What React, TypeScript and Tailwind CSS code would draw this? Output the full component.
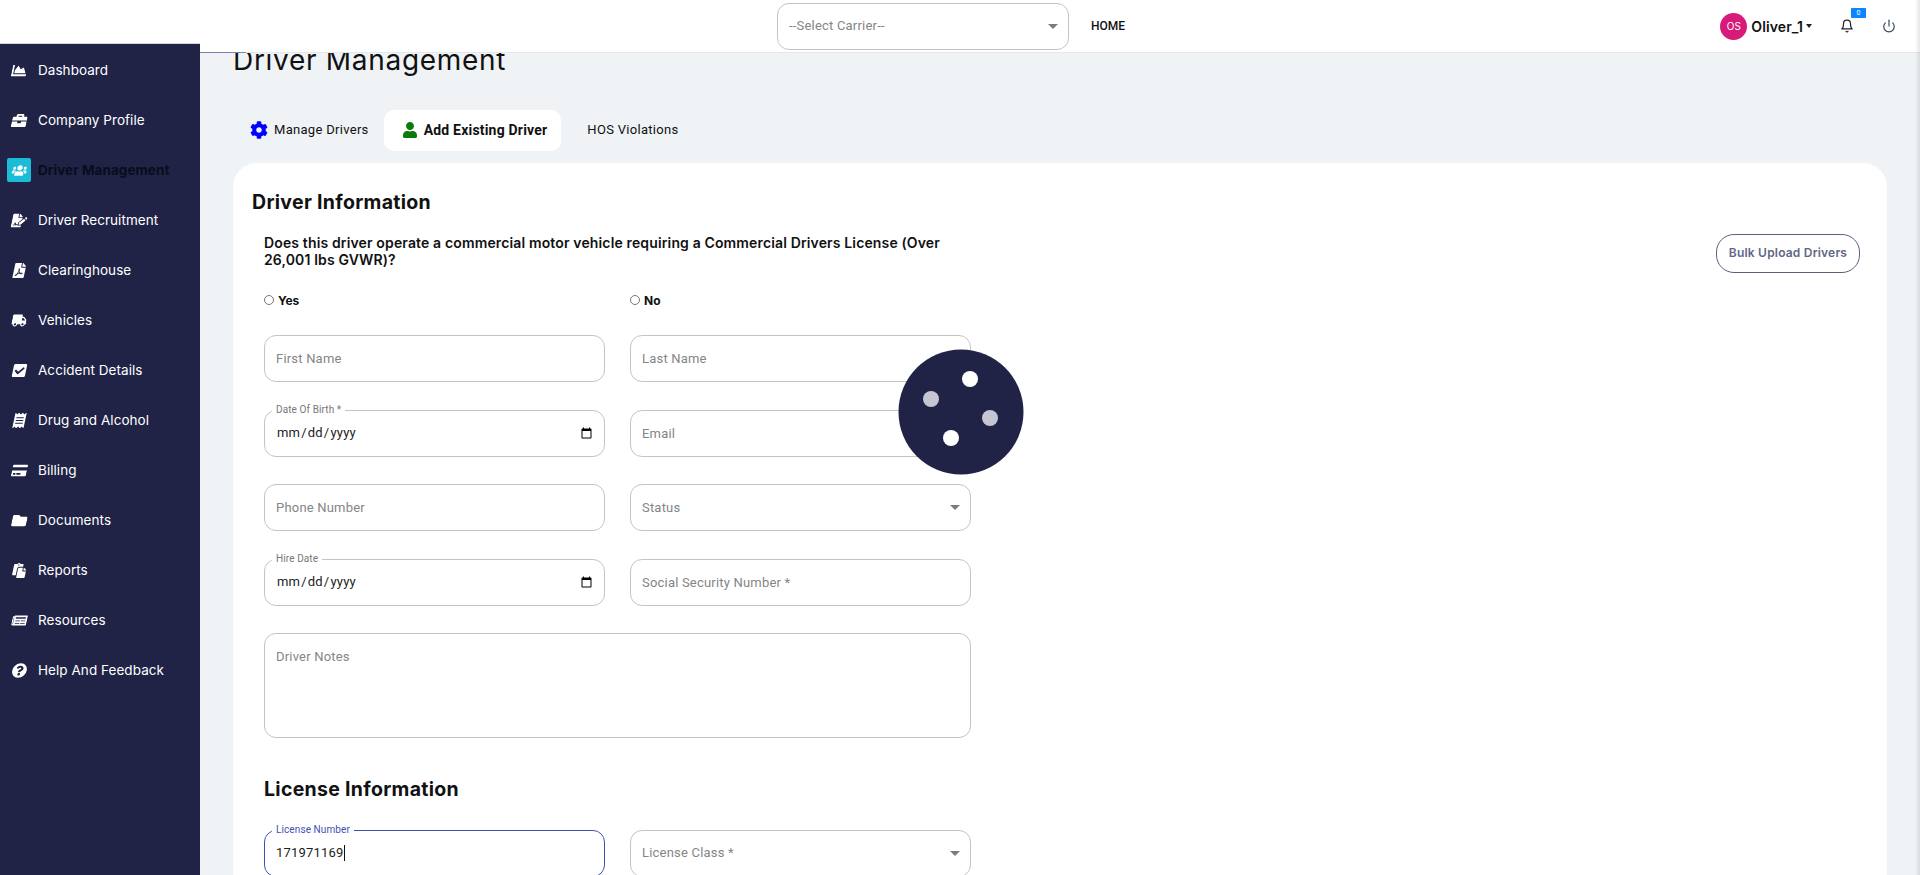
import React from 'react';
import {
  FaChartArea,
  FaBriefcase,
  FaUsers,
  FaFileSignature,
  FaFilePdf,
  FaTruck,
  FaCheckSquare,
  FaReceipt,
  FaCreditCard,
  FaFolder,
  FaPaste,
  FaNewspaper,
  FaQuestionCircle,
  FaCog,
  FaUser,
} from 'react-icons/fa';
import { FiBell, FiPower } from 'react-icons/fi';

const HEADING_FONT = "font-['Inter','Liberation_Sans',sans-serif]";
const FIELD_FONT = "font-['Roboto','Liberation_Sans',sans-serif]";

const navItems = [
  { label: 'Dashboard', icon: FaChartArea },
  { label: 'Company Profile', icon: FaBriefcase },
  { label: 'Driver Management', icon: FaUsers, active: true },
  { label: 'Driver Recruitment', icon: FaFileSignature },
  { label: 'Clearinghouse', icon: FaFilePdf },
  { label: 'Vehicles', icon: FaTruck },
  { label: 'Accident Details', icon: FaCheckSquare },
  { label: 'Drug and Alcohol', icon: FaReceipt },
  { label: 'Billing', icon: FaCreditCard },
  { label: 'Documents', icon: FaFolder },
  { label: 'Reports', icon: FaPaste },
  { label: 'Resources', icon: FaNewspaper },
  { label: 'Help And Feedback', icon: FaQuestionCircle },
];

const Caret: React.FC = () => (
  <span className="w-0 h-0 border-x-[5px] border-x-transparent border-t-[5px] border-t-[#7b7b7b]" />
);

const Outlined: React.FC<{
  label?: string;
  focused?: boolean;
  className?: string;
  children: React.ReactNode;
}> = ({ label, focused, className = 'h-[47px]', children }) => (
  <div
    className={`relative rounded-[12px] border ${focused ? 'border-[#3f51b5]' : 'border-[#c4c4c4]'} ${FIELD_FONT} ${className}`}
  >
    {label && (
      <span
        className={`absolute left-[7px] -top-[7px] bg-white px-[4px] text-[10px] leading-[12px] tracking-[0.1px] ${focused ? 'text-[#3f51b5]' : 'text-[#777]'}`}
      >
        {label}
      </span>
    )}
    {children}
  </div>
);

const TextField: React.FC<{ placeholder: string }> = ({ placeholder }) => (
  <Outlined>
    <input
      placeholder={placeholder}
      className="w-full h-full px-[11px] bg-transparent outline-none text-[13px] tracking-[0.2px] placeholder:text-[#858585]"
    />
  </Outlined>
);

const SelectField: React.FC<{ placeholder: string }> = ({ placeholder }) => (
  <Outlined>
    <div className="h-full pl-[11px] pr-[10px] flex items-center justify-between text-[13px] tracking-[0.2px] text-[#858585]">
      <span>{placeholder}</span>
      <Caret />
    </div>
  </Outlined>
);

const DateField: React.FC<{ label: string }> = ({ label }) => (
  <Outlined label={label}>
    <input
      type="date"
      className="w-full h-full pl-[11px] pr-[9px] bg-transparent outline-none text-[13px] tracking-[0.2px] text-[#222]"
    />
  </Outlined>
);

const Sidebar: React.FC = () => (
  <div className="w-[200px] shrink-0 flex flex-col">
    <div className="h-[44px] bg-white border-b border-[#d5d5dc]" />
    <nav className={`flex-1 pt-px bg-[#202346] ${HEADING_FONT}`}>
      {navItems.map(({ label, icon: Icon, active }) => (
        <div key={label} className="h-[50px] flex items-center text-[13.5px] tracking-[0.05px]">
          <span className={`ml-[7px] w-[24px] h-[24px] rounded-[2px] flex items-center justify-center text-white ${active ? 'bg-[#1bbcd6]' : ''}`}>
            <Icon className="h-[15px] w-auto -skew-x-12" />
          </span>
          <span className={`ml-[7px] ${active ? 'font-bold text-[#0b0b1c]' : 'text-white'}`}>{label}</span>
        </div>
      ))}
    </nav>
  </div>
);

const Header: React.FC = () => (
  <header className="h-[53px] shrink-0 bg-white border-b border-[#e4e8ee] flex items-center">
    <div className={`ml-[577px] w-[292px] h-[47px] rounded-[12px] border border-[#c4c4c4] pl-[11px] pr-[10px] flex items-center justify-between text-[13px] tracking-[0.2px] text-[#858585] ${FIELD_FONT}`}>
      <span>--Select Carrier--</span>
      <Caret />
    </div>
    <span className={`ml-[22px] text-[12px] font-medium text-[#111] ${FIELD_FONT}`}>HOME</span>
    <div className="ml-auto flex items-center pr-[24px]">
      <span className={`w-[27px] h-[27px] rounded-full bg-[#d81b7a] text-white text-[10px] flex items-center justify-center ${HEADING_FONT}`}>OS</span>
      <span className={`ml-[4px] text-[14px] font-semibold text-[#111] tracking-[0.1px] ${HEADING_FONT}`}>Oliver_1</span>
      <span className="ml-[3px] w-0 h-0 border-x-[3px] border-x-transparent border-t-[4px] border-t-[#222]" />
      <span className="relative ml-[28px] text-[#222]">
        <FiBell className="text-[14px]" />
        <span className={`absolute -top-[11px] left-[11px] w-[15px] h-[10px] bg-[#0d84ff] text-white text-[7px] leading-[10px] text-center rounded-[1px] ${FIELD_FONT}`}>0</span>
      </span>
      <FiPower className="ml-[28px] text-[14px] text-[#36425a]" />
    </div>
  </header>
);

const Tabs: React.FC = () => (
  <div className={`mt-[29px] h-[41px] shrink-0 flex items-center text-[#111] ${FIELD_FONT}`}>
    <div className="flex items-center pl-[17px] pr-[15px] gap-[6px] text-[13px] tracking-[0.3px]">
      <FaCog className="text-[18px] text-[#0000ff]" />
      <span>Manage Drivers</span>
    </div>
    <div className="h-full pl-[18px] pr-[14px] bg-white rounded-[10px] flex items-center gap-[6px] font-bold text-[14px] tracking-[0.2px]">
      <FaUser className="text-[16px] text-[#0a7a0a]" />
      <span>Add Existing Driver</span>
    </div>
    <span className="pl-[26px] text-[13px] tracking-[0.3px]">HOS Violations</span>
  </div>
);

const DriverForm: React.FC = () => (
  <section className="mt-[12px] shrink-0 bg-white rounded-t-[24px] pl-[19px] pr-[27px] pt-[27px] pb-[40px]">
    <h2 className={`text-[19.5px] leading-[24px] font-bold text-[#111] tracking-[0.3px] ${HEADING_FONT}`}>Driver Information</h2>
    <div className="pl-[12px] flex justify-between items-start">
      <div className="w-[707px]">
        <p className={`mt-[20px] w-[710px] text-[14px] leading-[17px] font-semibold text-[#111] tracking-[0.14px] ${HEADING_FONT}`}>
          Does this driver operate a commercial motor vehicle requiring a Commercial Drivers License (Over 26,001 lbs GVWR)?
        </p>
        <div className={`mt-[24px] grid grid-cols-[341px_341px] gap-x-[25px] text-[12px] font-bold text-[#111] ${HEADING_FONT}`}>
          <label className="flex items-center gap-[4px]"><input type="radio" name="cdl" className="m-0 w-[10px] h-[10px] -translate-y-px" />Yes</label>
          <label className="flex items-center gap-[4px]"><input type="radio" name="cdl" className="m-0 w-[10px] h-[10px] -translate-y-px" />No</label>
        </div>
        <div className="mt-[25.5px] grid grid-cols-[341px_341px] gap-x-[25px] gap-y-[27.5px]">
          <TextField placeholder="First Name" />
          <TextField placeholder="Last Name" />
          <DateField label="Date Of Birth *" />
          <TextField placeholder="Email" />
          <TextField placeholder="Phone Number" />
          <SelectField placeholder="Status" />
          <DateField label="Hire Date" />
          <TextField placeholder="Social Security Number *" />
          <Outlined className="col-span-2 h-[105px]">
            <textarea
              placeholder="Driver Notes"
              className="w-full h-full px-[11px] py-[13px] bg-transparent outline-none resize-none text-[13px] tracking-[0.2px] placeholder:text-[#858585]"
            />
          </Outlined>
        </div>
        <h2 className={`mt-[39px] text-[19.5px] leading-[24px] font-bold text-[#111] tracking-[0.3px] ${HEADING_FONT}`}>License Information</h2>
        <div className="mt-[28.5px] grid grid-cols-[341px_341px] gap-x-[25px]">
          <Outlined label="License Number" focused>
            <div className="h-full pl-[11px] flex items-center text-[13px] tracking-[0.2px] text-[#222]">
              171971169<span className="w-px h-[16px] bg-[#111]" />
            </div>
          </Outlined>
          <SelectField placeholder="License Class *" />
        </div>
      </div>
      <button className={`mt-[20px] w-[144px] h-[39px] rounded-[18px] border border-[#5e5e7e] bg-white text-[12px] font-semibold text-[#5f6785] tracking-[0.2px] ${HEADING_FONT}`}>
        Bulk Upload Drivers
      </button>
    </div>
  </section>
);

export default function App() {
  return (
    <div className="relative w-[1920px] h-[875px] flex overflow-hidden bg-white">
      <Sidebar />
      <div className="flex-1 min-w-0 flex flex-col">
        <Header />
        <main className="flex-1 min-h-0 bg-[#eff3f6] pl-[33px] pr-[33px] flex flex-col overflow-hidden">
          <h1 className={`-mt-[13.5px] h-[41px] shrink-0 text-[28px] leading-[41px] text-[#111] tracking-[0.7px] ${HEADING_FONT}`}>Driver Management</h1>
          <Tabs />
          <DriverForm />
        </main>
      </div>
      <div className="absolute left-[200px] top-[52px] w-[46px] h-px bg-[#8080b0]" />
      <svg className="absolute left-[898px] top-[349px] w-[126px] h-[126px]" viewBox="0 0 126 126">
        <circle cx="63" cy="63" r="62.5" fill="#202346" />
        <circle cx="72" cy="30" r="8" fill="#fff" />
        <circle cx="33" cy="50" r="8" fill="#c5c6d2" />
        <circle cx="92" cy="69" r="8" fill="#c5c6d2" />
        <circle cx="53" cy="89" r="8" fill="#fff" />
      </svg>
      <div className="absolute inset-y-0 right-0 w-[5px] bg-gradient-to-r from-transparent to-black/10" />
    </div>
  );
}
